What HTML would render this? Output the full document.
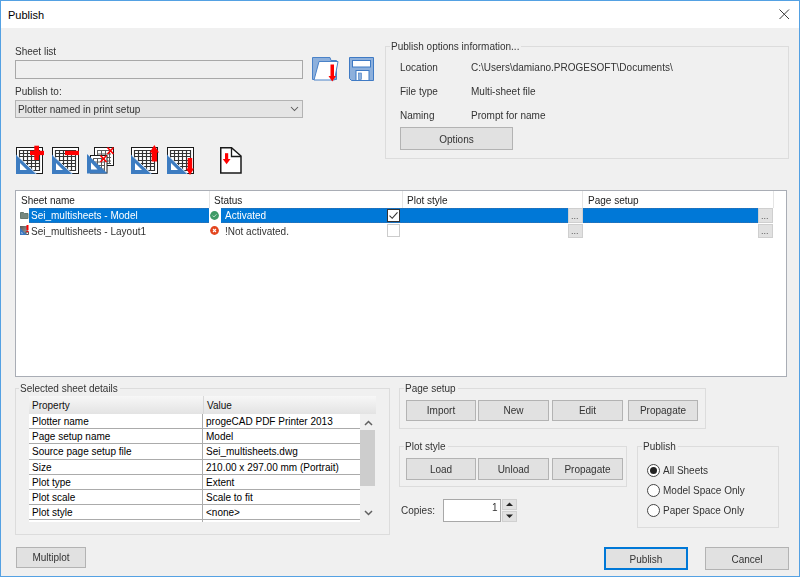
<!DOCTYPE html>
<html><head><meta charset="utf-8">
<style>
*{box-sizing:border-box;margin:0;padding:0}
html,body{width:800px;height:577px;overflow:hidden;background:#f0f0f0}
body{position:relative;font-family:"Liberation Sans",sans-serif;font-size:10px;color:#333}
.t:not([style*="color:#000"]),.gl,.btn{will-change:transform}
.a{position:absolute}
.t{position:absolute;white-space:pre;line-height:14px;font-size:10px}
.frame{position:absolute;left:0;top:0;width:800px;height:577px;border:1px solid #54a1e3;pointer-events:none}
.title{position:absolute;left:1px;top:1px;width:798px;height:27px;background:#fff}
.btn{position:absolute;background:#e1e1e1;border:1px solid #b3b3b3;text-align:center;line-height:19px;font-size:10px}
.grp{position:absolute;border:1px solid #dcdcdc}
.gl{position:absolute;background:#f0f0f0;padding:0 2px 0 1px;line-height:14px;white-space:pre}
</style></head><body>
<div class="title"></div>
<div class="t" style="left:8px;top:9px;font-size:11px;line-height:13px;color:#000">Publish</div>
<svg class="a" style="left:779px;top:9px" width="11" height="11" viewBox="0 0 11 11"><path d="M0.5 0.5L10 10M10 0.5L0.5 10" stroke="#3a3a3a" stroke-width="1" fill="none"/></svg>

<div class="t" style="left:15px;top:45px">Sheet list</div>
<div class="a" style="left:15px;top:60px;width:288px;height:19px;border:1px solid #a8a8a8;background:#f0f0f0"></div>
<div class="t" style="left:15px;top:85px">Publish to:</div>
<div class="a" style="left:15px;top:100px;width:288px;height:18px;border:1px solid #b3b3b3;background:#e5e5e5"></div>
<div class="t" style="left:18px;top:103px">Plotter named in print setup</div>
<svg class="a" style="left:290px;top:106px" width="9" height="6" viewBox="0 0 9 6"><path d="M1 1l3.5 3.5L8 1" stroke="#5a5a5a" stroke-width="1.05" fill="none"/></svg>

<svg class="a" style="left:16px;top:147px;overflow:visible" width="27" height="27" viewBox="0 0 27 27"><rect x="0.5" y="0.5" width="26" height="26" fill="#fff" stroke="#1a1a1a" stroke-width="1"/><rect x="2" y="2" width="23" height="23" fill="none" stroke="#fff"/><path d="M3.5 3V24M7.5 3V24M11.5 3V24M15.5 3V24M19.5 3V24M23.5 3V24M3 3.5H24M3 6.5H24M3 9.5H24M3 13.5H24M3 16.5H24M3 19.5H24M3 23.5H24" stroke="#333" stroke-width="1.15" fill="none"/><path d="M0 7.5L0 27L21 27Z" fill="#3d7cc1"/><path d="M1 8.5L20 26.5" stroke="#fff" stroke-width="0.8"/><path d="M4 16L4 23L11 23Z" fill="#fff"/><rect x="18.3" y="-1.3" width="4.7" height="14.3" fill="#f00"/><rect x="14" y="3.8" width="14" height="4.3" fill="#f00"/></svg>
<svg class="a" style="left:52px;top:147px;overflow:visible" width="27" height="27" viewBox="0 0 27 27"><rect x="0.5" y="0.5" width="26" height="26" fill="#fff" stroke="#1a1a1a" stroke-width="1"/><rect x="2" y="2" width="23" height="23" fill="none" stroke="#fff"/><path d="M3.5 3V24M7.5 3V24M11.5 3V24M15.5 3V24M19.5 3V24M23.5 3V24M3 3.5H24M3 6.5H24M3 9.5H24M3 13.5H24M3 16.5H24M3 19.5H24M3 23.5H24" stroke="#333" stroke-width="1.15" fill="none"/><path d="M0 7.5L0 27L21 27Z" fill="#3d7cc1"/><path d="M1 8.5L20 26.5" stroke="#fff" stroke-width="0.8"/><path d="M4 16L4 23L11 23Z" fill="#fff"/><rect x="13" y="3.8" width="14" height="4.3" fill="#f00"/></svg>
<svg class="a" style="left:87px;top:147px;overflow:visible" width="27" height="27" viewBox="0 0 27 27"><rect x="7.5" y="0.5" width="19" height="18" fill="#fff" stroke="#1a1a1a"/><path d="M10.5 3V17M14.5 3V17M18.5 3V17M22.5 3V17M10 3.5H24M10 7H24M10 10.5H24M10 14H24M10 16.5H24" stroke="#5a5a5a" stroke-width="1" fill="none"/><rect x="3.5" y="8.5" width="16.5" height="17.5" fill="#fff" stroke="#1a1a1a"/><path d="M6.5 11V25M10.5 11V25M14.5 11V25M17.5 11V25M6 11.5H18M6 15H18M6 18.5H18M6 22H18" stroke="#5a5a5a" stroke-width="1" fill="none"/><path d="M0 7L0 26.5L20.5 26.5Z" fill="#3d7cc1"/><path d="M4 15.5L4 22.5L10.5 22.5Z" fill="#fff"/><path d="M20.5 0.5L26.5 7M26.5 0.5L20.5 7" stroke="#f00" stroke-width="1.6"/><path d="M13.5 8.5L19.5 15M19.5 8.5L13.5 15" stroke="#f00" stroke-width="1.6"/></svg>
<svg class="a" style="left:131px;top:147px;overflow:visible" width="27" height="27" viewBox="0 0 27 27"><rect x="0.5" y="0.5" width="26" height="26" fill="#fff" stroke="#1a1a1a" stroke-width="1"/><rect x="2" y="2" width="23" height="23" fill="none" stroke="#fff"/><path d="M3.5 3V24M7.5 3V24M11.5 3V24M15.5 3V24M19.5 3V24M23.5 3V24M3 3.5H24M3 6.5H24M3 9.5H24M3 13.5H24M3 16.5H24M3 19.5H24M3 23.5H24" stroke="#333" stroke-width="1.15" fill="none"/><path d="M0 7.5L0 27L21 27Z" fill="#3d7cc1"/><path d="M1 8.5L20 26.5" stroke="#fff" stroke-width="0.8"/><path d="M4 16L4 23L11 23Z" fill="#fff"/><rect x="20.7" y="5" width="5.3" height="9.5" fill="#f00"/><path d="M18.6 5.5L23.3 -2L28 5.5Z" fill="#f00"/></svg>
<svg class="a" style="left:167px;top:147px;overflow:visible" width="27" height="27" viewBox="0 0 27 27"><rect x="0.5" y="0.5" width="26" height="26" fill="#fff" stroke="#1a1a1a" stroke-width="1"/><rect x="2" y="2" width="23" height="23" fill="none" stroke="#fff"/><path d="M3.5 3V24M7.5 3V24M11.5 3V24M15.5 3V24M19.5 3V24M23.5 3V24M3 3.5H24M3 6.5H24M3 9.5H24M3 13.5H24M3 16.5H24M3 19.5H24M3 23.5H24" stroke="#333" stroke-width="1.15" fill="none"/><path d="M0 7.5L0 27L21 27Z" fill="#3d7cc1"/><path d="M1 8.5L20 26.5" stroke="#fff" stroke-width="0.8"/><path d="M4 16L4 23L11 23Z" fill="#fff"/><rect x="20.7" y="11" width="4.5" height="11" fill="#f00"/><path d="M19 21.5L27 21.5L23 28Z" fill="#f00"/></svg>
<svg class="a" style="left:220px;top:147px;overflow:visible" width="22" height="27" viewBox="0 0 22 27"><path d="M0.75 0.75H11.5L21 9V26H0.75Z" fill="#fff" stroke="#1a1a1a" stroke-width="1.5"/><path d="M11.5 0.75V9.5H21" fill="none" stroke="#1a1a1a" stroke-width="1.3"/><rect x="5" y="6.2" width="3.2" height="6" fill="#f00"/><path d="M2.8 12L10.5 12L6.6 17.3Z" fill="#f00"/></svg>
<svg class="a" style="left:312px;top:57px;overflow:visible" width="26" height="24" viewBox="0 0 26 24"><path d="M0.5 0.5H18L19 3.5H24.5V22.5H0.5Z" fill="#8db0dc" stroke="#4a82c8"/><path d="M7 4.5H26L22.5 23H2Z" fill="#fff" stroke="#4a82c8"/><rect x="18.5" y="7.5" width="3.5" height="12" fill="#f00"/><path d="M16.5 19L24 19L20.3 24.5Z" fill="#f00"/></svg>
<svg class="a" style="left:349px;top:57px;overflow:visible" width="25" height="24" viewBox="0 0 25 24"><path d="M0.5 0.5H24.5V23.5H2.5L0.5 21.5Z" fill="#8db0dc" stroke="#3f7ac4"/><rect x="3.5" y="3.5" width="18" height="6.5" fill="#fff" stroke="#3f7ac4"/><rect x="7" y="13.5" width="13" height="10" fill="#fff" stroke="#3f7ac4"/><rect x="9.5" y="16" width="3" height="6.5" fill="#8db0dc" stroke="#3f7ac4" stroke-width="0.6"/></svg>
<!-- group publish options -->
<div class="grp" style="left:385px;top:46px;width:404px;height:113px"></div>
<div class="gl" style="left:390px;top:40px">Publish options information...</div>
<div class="t" style="left:400px;top:61px">Location</div>
<div class="t" style="left:471px;top:61px">C:\Users\damiano.PROGESOFT\Documents\</div>
<div class="t" style="left:400px;top:85px">File type</div>
<div class="t" style="left:471px;top:85px">Multi-sheet file</div>
<div class="t" style="left:400px;top:109px">Naming</div>
<div class="t" style="left:471px;top:109px">Prompt for name</div>
<div class="btn" style="left:400px;top:127px;width:113px;height:23px;line-height:23px">Options</div>

<!-- list -->
<div class="a" style="left:15px;top:190px;width:772px;height:187px;border:1px solid #a9adb5;background:#fff"></div>
<div class="a" style="left:209px;top:191px;width:1px;height:17px;background:#e5e5e5"></div>
<div class="a" style="left:402px;top:191px;width:1px;height:17px;background:#e5e5e5"></div>
<div class="a" style="left:582px;top:191px;width:1px;height:17px;background:#e5e5e5"></div>
<div class="a" style="left:773px;top:191px;width:1px;height:17px;background:#e5e5e5"></div>
<div class="t" style="left:21px;top:194px;color:#222">Sheet name</div>
<div class="t" style="left:214px;top:194px;color:#222">Status</div>
<div class="t" style="left:407px;top:194px;color:#222">Plot style</div>
<div class="t" style="left:588px;top:194px;color:#222">Page setup</div>
<!-- row1 selected -->
<div class="a" style="left:29px;top:208px;width:744px;height:15px;background:#0078d7;border-top:1px dotted #3a6ea8;border-bottom:1px dotted #3a6ea8"></div>
<div class="a" style="left:209px;top:208px;width:12px;height:15px;background:#fff"></div>
<svg class="a" style="left:20px;top:212px" width="9" height="8" viewBox="0 0 9 8"><path d="M0.5 0.5h3l1 1h3.5v5h-7.5z" fill="#75877f" stroke="#66786f" stroke-width="1"/></svg>
<div class="t" style="left:31px;top:209px;color:#fff">Sei_multisheets - Model</div>
<svg class="a" style="left:210px;top:211px" width="9" height="9" viewBox="0 0 9 9"><circle cx="4.5" cy="4.5" r="4.4" fill="#3f9a66"/><path d="M2.5 4.6l1.4 1.4 2.6-2.7" stroke="#bfe3cf" stroke-width="0.9" fill="none"/></svg>
<div class="t" style="left:225px;top:209px;color:#fff">Activated</div>
<div class="a" style="left:387px;top:209px;width:13px;height:13px;background:#fff;border:1px solid #333"></div>
<svg class="a" style="left:388px;top:210px" width="11" height="11" viewBox="0 0 11 11"><path d="M1.5 5.7l2.7 2.6 5.3-6" stroke="#333" stroke-width="1.1" fill="none"/></svg>
<div class="a" style="left:568px;top:208px;width:15px;height:15px;background:#e1e1e1;border:1px solid #cfcfcf"></div>
<div class="t" style="left:571px;top:209px;color:#555;font-size:9px">...</div>
<div class="a" style="left:758px;top:208px;width:15px;height:15px;background:#e1e1e1;border:1px solid #cfcfcf"></div>
<div class="t" style="left:761px;top:209px;color:#555;font-size:9px">...</div>
<!-- row2 -->
<svg class="a" style="left:20px;top:225px" width="9" height="10" viewBox="0 0 9 10"><defs><linearGradient id="lg" x1="0" y1="0" x2="1" y2="1"><stop offset="0" stop-color="#555"/><stop offset="1" stop-color="#aaa"/></linearGradient></defs><rect x="0" y="1" width="8" height="9" fill="url(#lg)"/><rect x="6" y="7" width="2.5" height="2.5" fill="#fff" stroke="#333" stroke-width="0.8"/><path d="M0 3v7h7z" fill="#3c78c0"/><path d="M1.5 7v1.5h1.5z" fill="#fff"/><rect x="6.5" y="0" width="2" height="5" fill="#f00"/><rect x="6.5" y="5.8" width="2" height="1.4" fill="#f00"/></svg>
<div class="t" style="left:31px;top:225px">Sei_multisheets - Layout1</div>
<svg class="a" style="left:210px;top:226px" width="9" height="9" viewBox="0 0 9 9"><circle cx="4.5" cy="4.5" r="4.4" fill="#e3461f"/><path d="M3 3l3 3M6 3l-3 3" stroke="#fff" stroke-width="1.1"/></svg>
<div class="t" style="left:225px;top:225px">!Not activated.</div>
<div class="a" style="left:387px;top:224px;width:13px;height:13px;background:#fff;border:1px solid #cccccc"></div>
<div class="a" style="left:568px;top:224px;width:15px;height:14px;background:#e1e1e1;border:1px solid #cfcfcf"></div>
<div class="t" style="left:571px;top:224px;color:#555;font-size:9px">...</div>
<div class="a" style="left:758px;top:224px;width:15px;height:14px;background:#e1e1e1;border:1px solid #cfcfcf"></div>
<div class="t" style="left:761px;top:224px;color:#555;font-size:9px">...</div>

<!-- selected sheet details -->
<div class="grp" style="left:15px;top:388px;width:375px;height:147px"></div>
<div class="gl" style="left:19px;top:382px">Selected sheet details</div>
<!-- table -->
<div class="a" style="left:29px;top:396px;width:347px;height:18px;background:linear-gradient(#f7f7f7,#e3e3e3)"></div>
<div class="a" style="left:203px;top:396px;width:1px;height:18px;background:#d8d8d8"></div>
<div class="t" style="color:#000;left:32px;top:399px;color:#111">Property</div>
<div class="t" style="color:#000;left:207px;top:399px;color:#111">Value</div>
<div class="a" style="left:29px;top:414px;width:331px;height:108px;background:#fff"></div>
<div class="a" style="left:202px;top:414px;width:1px;height:108px;background:#ababab"></div>
<div class="a" style="left:29px;top:428px;width:331px;height:1px;background:#ababab"></div>
<div class="t" style="color:#000;left:32px;top:415px">Plotter name</div><div class="t" style="color:#000;left:206px;top:415px">progeCAD PDF Printer 2013</div>
<div class="a" style="left:29px;top:443px;width:331px;height:1px;background:#ababab"></div>
<div class="t" style="color:#000;left:32px;top:430px">Page setup name</div><div class="t" style="color:#000;left:206px;top:430px">Model</div>
<div class="a" style="left:29px;top:459px;width:331px;height:1px;background:#ababab"></div>
<div class="t" style="color:#000;left:32px;top:445px">Source page setup file</div><div class="t" style="color:#000;left:206px;top:445px">Sei_multisheets.dwg</div>
<div class="a" style="left:29px;top:474px;width:331px;height:1px;background:#ababab"></div>
<div class="t" style="color:#000;left:32px;top:461px">Size</div><div class="t" style="color:#000;left:206px;top:461px">210.00 x 297.00 mm (Portrait)</div>
<div class="a" style="left:29px;top:489px;width:331px;height:1px;background:#ababab"></div>
<div class="t" style="color:#000;left:32px;top:476px">Plot type</div><div class="t" style="color:#000;left:206px;top:476px">Extent</div>
<div class="a" style="left:29px;top:504px;width:331px;height:1px;background:#ababab"></div>
<div class="t" style="color:#000;left:32px;top:491px">Plot scale</div><div class="t" style="color:#000;left:206px;top:491px">Scale to fit</div>
<div class="a" style="left:29px;top:519px;width:331px;height:1px;background:#ababab"></div>
<div class="t" style="color:#000;left:32px;top:506px">Plot style</div><div class="t" style="color:#000;left:206px;top:506px">&lt;none&gt;</div>
<div class="a" style="left:360px;top:414px;width:16px;height:108px;background:#f0f0f0"></div>
<div class="a" style="left:360px;top:430px;width:15px;height:56px;background:#cdcdcd"></div>
<svg class="a" style="left:364px;top:420px" width="9" height="6" viewBox="0 0 9 6"><path d="M1 5l3.5-3.5L8 5" stroke="#606060" stroke-width="1.5" fill="none"/></svg>
<svg class="a" style="left:364px;top:510px" width="9" height="6" viewBox="0 0 9 6"><path d="M1 1l3.5 3.5L8 1" stroke="#606060" stroke-width="1.5" fill="none"/></svg>

<!-- page setup -->
<div class="grp" style="left:399px;top:388px;width:307px;height:41px"></div>
<div class="gl" style="left:404px;top:382px">Page setup</div>
<div class="btn" style="left:406px;top:400px;width:70px;height:21px">Import</div>
<div class="btn" style="left:478px;top:400px;width:71px;height:21px">New</div>
<div class="btn" style="left:552px;top:400px;width:71px;height:21px">Edit</div>
<div class="btn" style="left:628px;top:400px;width:70px;height:21px">Propagate</div>

<!-- plot style -->
<div class="grp" style="left:399px;top:446px;width:228px;height:41px"></div>
<div class="gl" style="left:404px;top:440px">Plot style</div>
<div class="btn" style="left:406px;top:458px;width:70px;height:22px;line-height:21px">Load</div>
<div class="btn" style="left:478px;top:458px;width:71px;height:22px;line-height:21px">Unload</div>
<div class="btn" style="left:552px;top:458px;width:71px;height:22px;line-height:21px">Propagate</div>

<!-- publish group -->
<div class="grp" style="left:637px;top:446px;width:142px;height:82px"></div>
<div class="gl" style="left:642px;top:440px">Publish</div>
<div class="a" style="left:647px;top:464px;width:13px;height:13px;border-radius:50%;background:#fff;border:1px solid #454545"></div>
<div class="a" style="left:650px;top:467px;width:7px;height:7px;border-radius:50%;background:#222"></div>
<div class="t" style="left:663px;top:464px">All Sheets</div>
<div class="a" style="left:647px;top:484px;width:13px;height:13px;border-radius:50%;background:#fff;border:1px solid #454545"></div>
<div class="t" style="left:663px;top:484px">Model Space Only</div>
<div class="a" style="left:647px;top:504px;width:13px;height:13px;border-radius:50%;background:#fff;border:1px solid #454545"></div>
<div class="t" style="left:663px;top:504px">Paper Space Only</div>

<!-- copies -->
<div class="t" style="left:401px;top:504px">Copies:</div>
<div class="a" style="left:443px;top:499px;width:58px;height:23px;border:1px solid #a8a8a8;background:#fff"></div>
<div class="t" style="left:492px;top:501px">1</div>
<div class="a" style="left:502px;top:499px;width:15px;height:11px;background:#e1e1e1;border:1px solid #d0d0d0"></div>
<div class="a" style="left:502px;top:511px;width:15px;height:11px;background:#e1e1e1;border:1px solid #d0d0d0"></div>
<svg class="a" style="left:506px;top:502px" width="7" height="5" viewBox="0 0 7 5"><path d="M0 4h7L3.5 0.5z" fill="#222"/></svg>
<svg class="a" style="left:506px;top:514px" width="7" height="5" viewBox="0 0 7 5"><path d="M0 0.5h7L3.5 4z" fill="#222"/></svg>

<div class="btn" style="left:16px;top:547px;width:70px;height:21px;line-height:20px">Multiplot</div>
<div class="btn" style="left:604px;top:547px;width:84px;height:23px;border:2px solid #0078d7;line-height:21px">Publish</div>
<div class="btn" style="left:705px;top:547px;width:84px;height:23px;line-height:23px">Cancel</div>

<div class="frame"></div>
</body></html>
